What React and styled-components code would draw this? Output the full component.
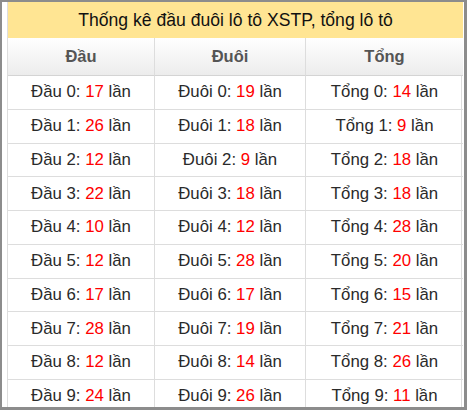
import React from "react";
import styled, { createGlobalStyle } from "styled-components";

const GlobalStyle = createGlobalStyle`
  html, body {
    margin: 0;
    padding: 0;
    background: #ffffff;
  }
  body {
    font-family: "Liberation Sans", Arial, sans-serif;
  }
`;

const dau = [17, 26, 12, 22, 10, 12, 17, 28, 12, 24];
const duoi = [19, 18, 9, 18, 12, 28, 17, 19, 14, 26];
const tong = [14, 9, 18, 18, 28, 20, 15, 21, 26, 11];

export default function App() {
  return (
    <React.Fragment>
      <GlobalStyle />
      <Frame>
        <Panel>
          <StatTable>
            <Title>Thống kê đầu đuôi lô tô XSTP, tổng lô tô</Title>
            <HeaderRow>
              <HeaderCell>Đầu</HeaderCell>
              <HeaderCell>Đuôi</HeaderCell>
              <HeaderCell>Tổng</HeaderCell>
            </HeaderRow>
            {dau.map((count, idx) => (
              <Row key={idx}>
                <Cell>
                  Đầu {idx}: <Count>{count}</Count> lần
                </Cell>
                <Cell>
                  Đuôi {idx}: <Count>{duoi[idx]}</Count> lần
                </Cell>
                <Cell>
                  Tổng {idx}: <Count>{tong[idx]}</Count> lần
                </Cell>
              </Row>
            ))}
          </StatTable>
        </Panel>
      </Frame>
    </React.Fragment>
  );
}

const Frame = styled.div`
  width: 467px;
  height: 410px;
  box-sizing: border-box;
  background: #8c8c8c;
  padding: 2px 3px 3px 2px;
  overflow: hidden;
`;

const Panel = styled.div`
  height: 100%;
  background: #ffffff;
  padding-left: 5px;
  padding-right: 2px;
  overflow: hidden;
`;

const StatTable = styled.div`
  display: grid;
  grid-template-columns: 146px 151px 158px;
  width: 455px;
  border-right: 1px solid #dddddd;
  border-left: 1px solid #dddddd;
  box-sizing: border-box;
`;

const Title = styled.div`
  grid-column: 1 / -1;
  height: 36px;
  display: flex;
  align-items: center;
  justify-content: center;
  background: #ffe593;
  color: #111111;
  font-size: 17.6px;
`;

const HeaderRow = styled.div`
  display: contents;
`;

const HeaderCell = styled.div`
  height: 38px;
  box-sizing: border-box;
  display: flex;
  align-items: center;
  justify-content: center;
  background: linear-gradient(#ffffff, #ececec);
  border-bottom: 1px solid #d4d4d4;
  border-left: 1px solid #dddddd;
  color: #555555;
  font-weight: bold;
  font-size: 16.5px;

  &:first-child {
    border-left: none;
  }
`;

const Row = styled.div`
  display: contents;
`;

const Cell = styled.div`
  height: 33.75px;
  box-sizing: border-box;
  display: flex;
  align-items: center;
  justify-content: center;
  border-bottom: 1px solid #dddddd;
  border-left: 1px solid #dddddd;
  color: #2a2a2a;
  font-size: 16.8px;
  white-space: pre;

  &:first-child {
    border-left: none;
  }
`;

const Count = styled.span`
  color: #ff0000;
`;
